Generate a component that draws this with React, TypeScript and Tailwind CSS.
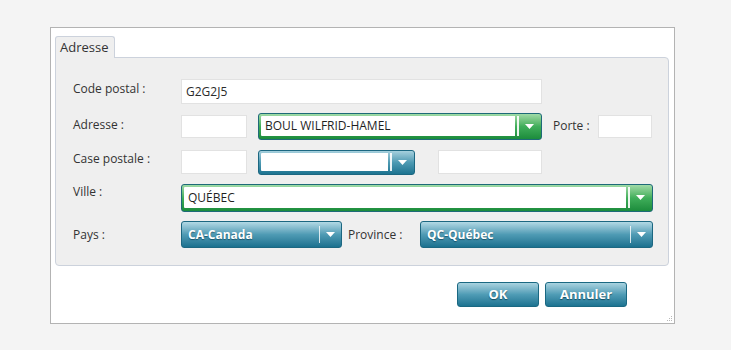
import React from 'react';

const font = { fontFamily: '"Open Sans", "Noto Sans", sans-serif' };

// little white triangle used by every combo / dropdown
const Arrow = () => (
  <svg width="9" height="5" viewBox="0 0 9 5" className="block">
    <path d="M0 0 H9 L4.5 5 Z" fill="#ffffff" />
  </svg>
);

const TextBox = ({ w, h = 'h-[23px]', value }: { w: string; h?: string; value?: string }) => (
  <div className={`${w} ${h} bg-white border border-[#e2e2e2] flex items-center pl-[4px] text-[12px] text-[#2b2b2b]`}>
    {value}
  </div>
);

// editable combo: white field inside a coloured frame, button at right
const Combo = ({ w, h, value, green }: { w: string; h: string; value?: string; green?: boolean }) => (
  <div
    className={`${w} ${h} rounded-[3px] border flex p-[2px] pb-[3px] ${
      green
        ? 'border-[#1e6a78] bg-gradient-to-b from-[#9fdba7] via-[#3fae5a] to-[#1b8c3c]'
        : 'border-[#1c6781] bg-gradient-to-b from-[#a6d0dd] via-[#4d9ab3] to-[#1c7491]'
    }`}
  >
    <div className="flex-1 bg-white rounded-l-[1px] flex items-center pl-[4px] text-[12px] text-[#1f1f1f]">{value}</div>
    <div className="w-[2px] bg-white/90 ml-[2px]" />
    <div className="w-[20px] flex items-center justify-center">
      <Arrow />
    </div>
  </div>
);

const Dropdown = ({ w, value }: { w: string; value: string }) => (
  <div className={`${w} h-[27px] rounded-[3px] border border-[#1c6781] bg-gradient-to-b from-[#b2d9e5] via-[#4f9bb4] to-[#1a718f] flex items-center`}>
    <span className="flex-1 pl-[6px] text-[12px] font-bold text-white [text-shadow:0_1px_1px_rgba(0,50,70,0.6)]">{value}</span>
    <div className="w-[1px] h-[17px] bg-white/80" />
    <div className="w-[21px] flex items-center justify-center">
      <Arrow />
    </div>
  </div>
);

const Label = ({ text, mt, w = 'w-[108px]' }: { text: string; mt: string; w?: string }) => (
  <div className={`${w} ${mt} leading-[16px] text-[12px] text-[#333]`}>{text}</div>
);

const Btn = ({ text }: { text: string }) => (
  <button className="w-[82px] h-[25px] rounded-[3px] border border-[#1a6882] bg-gradient-to-b from-[#a9d3e0] via-[#4f9cb5] to-[#1b7391] text-[13px] font-bold text-white [text-shadow:0_1px_1px_rgba(0,50,70,0.7)]">
    {text}
  </button>
);

export default function App() {
  return (
    <div className="w-[731px] h-[350px] bg-[#f4f4f4] pt-[27px] pl-[50px]" style={font}>
      <div className="relative w-[625px] h-[297px] bg-white border border-[#b3b3b3] pt-[8px] pl-[4px]">
        {/* tab */}
        <div className="relative z-10 w-[60px] h-[22px] bg-[#efefef] border border-b-0 border-[#ccd2dc] rounded-t-[3px] text-[13px] text-[#333] pl-[4px] leading-[21px]">
          Adresse
        </div>
        {/* panel */}
        <div className="-mt-[1px] w-[614px] h-[209px] bg-[#efefef] border border-[#ccd2dc] rounded-b-[4px] rounded-tr-[4px] pl-[17px] pt-[21px]">
          <div className="flex items-start">
            <Label text="Code postal :" mt="mt-[2px]" />
            <TextBox w="w-[361px]" h="h-[25px]" value="G2G2J5" />
          </div>
          <div className="flex items-start mt-[9px]">
            <Label text="Adresse :" mt="mt-[4px]" />
            <div className="mt-[2px]"><TextBox w="w-[66px]" /></div>
            <div className="ml-[11px]"><Combo w="w-[284px]" h="h-[27px]" value="BOUL WILFRID-HAMEL" green /></div>
            <Label text="Porte :" mt="mt-[5px]" w="w-[45px] ml-[11px]" />
            <div className="mt-[2px]"><TextBox w="w-[54px]" /></div>
          </div>
          <div className="flex items-start mt-[10px]">
            <Label text="Case postale :" mt="mt-[1px]" />
            <TextBox w="w-[66px]" h="h-[24px]" />
            <div className="ml-[11px]"><Combo w="w-[157px]" h="h-[25px]" /></div>
            <div className="ml-[23px]"><TextBox w="w-[104px]" h="h-[24px]" /></div>
          </div>
          <div className="flex items-start mt-[9px]">
            <Label text="Ville :" mt="mt-[0px]" />
            <Combo w="w-[472px]" h="h-[28px]" value="QUÉBEC" green />
          </div>
          <div className="flex items-start mt-[9px]">
            <Label text="Pays :" mt="mt-[6px]" />
            <Dropdown w="w-[161px]" value="CA-Canada" />
            <Label text="Province :" mt="mt-[6px]" w="w-[72px] ml-[6px]" />
            <Dropdown w="w-[233px]" value="QC-Québec" />
          </div>
        </div>
        <div className="flex justify-end gap-[6px] mt-[16px] pr-[47px]">
          <Btn text="OK" />
          <Btn text="Annuler" />
        </div>
        {/* resize grip */}
        <svg width="6" height="6" viewBox="0 0 6 6" className="absolute right-[1px] bottom-[1px]">
          <rect x="4" y="0" width="1" height="1" fill="#b8b8b8" />
          <rect x="2" y="2" width="1" height="1" fill="#b8b8b8" />
          <rect x="4" y="2" width="1" height="1" fill="#b8b8b8" />
          <rect x="0" y="4" width="1" height="1" fill="#b8b8b8" />
          <rect x="2" y="4" width="1" height="1" fill="#b8b8b8" />
          <rect x="4" y="4" width="1" height="1" fill="#b8b8b8" />
        </svg>
      </div>
    </div>
  );
}
